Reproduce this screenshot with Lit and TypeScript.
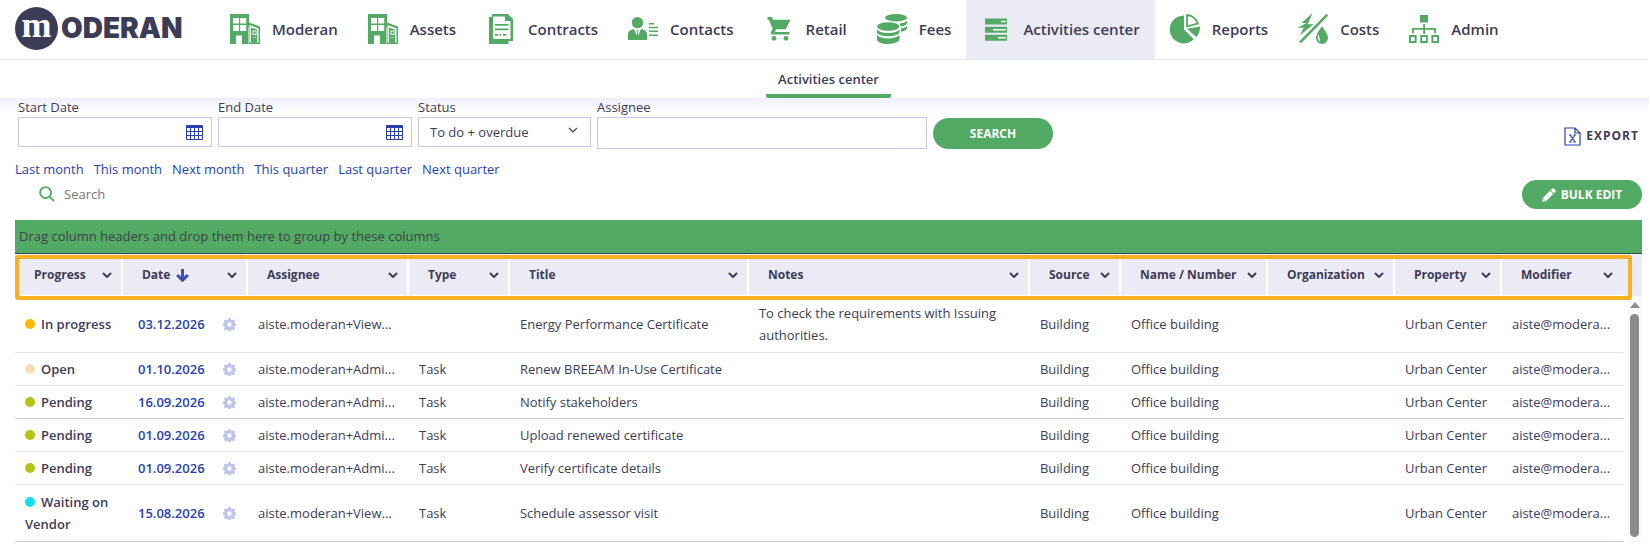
import { LitElement, html, svg, css } from "lit";
import { customElement, property, state } from "lit/decorators.js";
import { classMap } from "lit/directives/class-map.js";
import { styleMap } from "lit/directives/style-map.js";

const building = svg`
  <path d="M0 0h19v8.500l11 4V30H19V13H18.500V30H12v-8.600H6V30H0z"/>
  <path class="cut" d="M3 4h6v5.600H3zM10.200 4h6v5.600h-6zM3 11h6v6H3zM10.200 11h6v6h-6zM19.500 11l9 3.300V28.500H27V24h-4v4.500h-3.500z"/>
  <path d="M20.800 13.500l6.400 2V28.500H26v-5h-3v5h-2.200z"/>
  <path class="cut" d="M22.500 16.500h4v4.500h-4z"/>
  <path d="M23.300 17.500h2.400v2.300h-2.400z"/>`;

const icons: Record<string, unknown> = {
  building,
  contract: svg`
    <path d="M3 0h16l5 5V27h-4.500v3H0V3h3z" transform="translate(3)"/>
    <path class="cut" d="M7 2.500h12v4.500H24.500V25H7z"/>
    <path d="M20.500 2.500L24.500 6.500H20.500zM9 10h13.500v1.800H9zM9 14.500h13.500v1.800H9zM9 20h3v1.800H9zM13.500 20h1.500v1.800h-1.500zM17 20h3.500v1.800H17z"/>`,
  contact: svg`
    <circle cx="9.500" cy="8.600" r="5.700"/>
    <path d="M0 26v-5.500c0-3 2.400-4.900 6-5.500l2.800 6.500L9.200 17.500 8.500 16h2L9.800 17.500l.4 4L13 15c3.600.6 6 2.500 6 5.500V26z"/>
    <path d="M21 9h5v1.500h-5zM21 12.800h9v1.500h-9zM21 16.600h9v1.500h-9zM21 20.400h9v1.500h-9z"/>`,
  cart: svg`
    <path d="M3.500 3h4.300l1.300 2.700H26.500l-4.800 9.600h-9.500l-1.400 2.700H25.500V20.400H8.200c-1.300 0-2-1.300-1.300-2.500l1.800-3.200L4.800 5.700H3.500z"/>
    <circle cx="10" cy="24.300" r="2.400"/><circle cx="22" cy="24.300" r="2.400"/>`,
  coins: svg`
    <ellipse cx="19" cy="3.700" rx="11" ry="3.700"/>
    <path d="M22.500 9.600c4-.5 6.600-1.600 7.500-2.800v2c0 2-2.600 3.200-6.200 3.800zM24 14.600c3.500-.6 5.300-1.600 6-2.800v2c0 2-2.200 3.400-6 4z"/>
    <ellipse cx="11.200" cy="12.500" rx="11.200" ry="4.200"/>
    <path d="M0 15.500c2 2.500 6.500 3.500 11.200 3.500s9.300-1 11.300-3.500v2.500c0 2.500-5 4.300-11.300 4.300S0 20.500 0 18zM0 21c2 2.300 6.500 3.400 11.200 3.400s9.300-1.100 11.300-3.400v4.300c0 2.600-5 4.600-11.300 4.600S0 28 0 25.400z"/>`,
  list: svg`
    <path d="M4 4.500h22v6H4zM4 12.700h22v6H4zM4 20.800h22v6H4z"/>
    <path class="cut" d="M20 6.700h5v1.600h-5zM12 15h13v1.600H12zM17 23h8v1.600h-8z"/>`,
  pie: svg`
    <path d="M14 1.500V15.500L23.800 25.200A14 14 0 1 1 14 1.500z"/>
    <path d="M17 14.800L30 12.500c.2 4-1 7.400-3.600 10.500z"/>
    <path fill-rule="evenodd" d="M16.200 0c6.300.3 11 4 12.800 10.300L16.200 13.500zM18 2.200v9l8.600-2.200C25.200 5.200 22.500 3 18 2.200z"/>`,
  utility: svg`
    <path d="M14.500-1L3.500 9h5.300L-.5 13.800h6.300L1.800 21.500 15.500 10.300H9.800z"/>
    <path d="M28.300 0L30.300 1.600 3 29.200 1 27.700z"/>
    <path fill-rule="evenodd" d="M24 12c3 5 6 8 6 12a6 6 0 0 1-12 0c0-4 3-7 6-12zM20.500 20c-1.300 3-.8 6.500 1.800 8-1-3-.8-5.500-1.800-8z"/>`,
  tree: svg`
    <path d="M11 1h8v7.400h-8zM14.200 10h1.800v10h-1.800zM3 14h24v1.800H3zM3 14h1.800v5.500H3zM25.200 14H27v5.500h-1.800z"/>
    <path fill-rule="evenodd" d="M0 21h7.600v8H0zm2 2v4h3.600v-4zM11.200 21h7.600v8h-7.600zm2 2v4h3.600v-4zM22.400 21H30v8h-7.600zm2 2v4H28v-4z"/>`,
};

const navItems = [
  ["Moderan", "building"],
  ["Assets", "building"],
  ["Contracts", "contract"],
  ["Contacts", "contact"],
  ["Retail", "cart"],
  ["Fees", "coins"],
  ["Activities center", "list"],
  ["Reports", "pie"],
  ["Costs", "utility"],
  ["Admin", "tree"],
];

const ranges = ["Last month", "This month", "Next month", "This quarter", "Last quarter", "Next quarter"];

const columns: Array<[string, number]> = [
  ["Progress", 108],
  ["Date", 125],
  ["Assignee", 161],
  ["Type", 101],
  ["Title", 239],
  ["Notes", 281],
  ["Source", 91],
  ["Name / Number", 147],
  ["Organization", 127],
  ["Property", 107],
  ["Modifier", 122],
];
const totalWeight = columns.reduce((sum, [, w]) => sum + w, 0);

interface Activity {
  status: string;
  tone: string;
  date: string;
  assignee: string;
  type: string;
  title: string;
  notes?: string;
  monthEnd?: boolean;
}

const admin = "aiste.moderan+Admi...";
const viewer = "aiste.moderan+View...";
const activities: Activity[] = [
  { status: "In progress", tone: "progress", date: "03.12.2026", assignee: viewer, type: "", title: "Energy Performance Certificate", notes: "To check the requirements with Issuing authorities." },
  { status: "Open", tone: "open", date: "01.10.2026", assignee: admin, type: "Task", title: "Renew BREEAM In-Use Certificate" },
  { status: "Pending", tone: "pending", date: "16.09.2026", assignee: admin, type: "Task", title: "Notify stakeholders", monthEnd: true },
  { status: "Pending", tone: "pending", date: "01.09.2026", assignee: admin, type: "Task", title: "Upload renewed certificate" },
  { status: "Pending", tone: "pending", date: "01.09.2026", assignee: admin, type: "Task", title: "Verify certificate details" },
  { status: "Waiting on Vendor", tone: "waiting", date: "15.08.2026", assignee: viewer, type: "Task", title: "Schedule assessor visit", monthEnd: true },
];

const chevron = html`<svg class="chevron" viewBox="0 0 10 6" aria-hidden="true"><path d="M1 1l4 4 4-4" /></svg>`;

@customElement("main-nav")
class MainNav extends LitElement {
  @property() active = "";

  static styles = css`
    :host { display: block; border-bottom: 1px solid #e5e5f0; }
    .bar { display: flex; height: 59px; }
    .brand { display: flex; align-items: center; width: 215px; box-sizing: border-box; padding: 0 0 2px 15px; gap: 3px; text-decoration: none; color: #3d3c57; flex: none; }
    .mark { display: flex; justify-content: center; width: 43px; height: 43px; border-radius: 50%; background: #3d3c57; color: #fff; font: bold 36px/36px "Liberation Serif", serif; }
    .word { font: 900 28px/43px Inter, sans-serif; }
    .links { display: flex; }
    .item { display: flex; align-items: center; gap: 12px; padding: 0 15px 2px; color: #3d3c57; text-decoration: none; font-weight: 600; font-size: 15px; white-space: nowrap; }
    .item.active { background: #ebebf5; }
    svg { width: 30px; height: 30px; overflow: visible; fill: #53aa65; flex: none; }
    .cut { fill: #fff; }
  `;

  render() {
    return html`<header class="bar">
      <a class="brand" href="#home" aria-label="Moderan"><span class="mark">m</span><span class="word">ODERAN</span></a>
      <nav class="links" aria-label="Main">
        ${navItems.map(
          ([label, icon]) => html`<a class=${classMap({ item: true, active: label === this.active })} href="#${icon}">
            <svg viewBox="0 0 30 30" aria-hidden="true">${icons[icon]}</svg><span>${label}</span></a>`
        )}
      </nav>
    </header>`;
  }
}

@customElement("filter-bar")
class FilterBar extends LitElement {
  static styles = css`
    :host { display: block; }
    .filters { display: flex; align-items: flex-start; gap: 6px; padding: 0 10px 0 18px; }
    .field { display: flex; flex-direction: column; }
    .date { width: 194px; }
    .status { width: 173px; }
    .assignee { width: 330px; }
    label { line-height: 19px; color: #3d3c57; }
    .box { display: flex; align-items: center; height: 30px; box-sizing: border-box; border: 1px solid #c5c9e8; background: #fff; }
    .box.tall { height: 32px; }
    input, select { flex: 1; min-width: 0; height: 100%; border: 0; padding: 0 11px; background: none; font: inherit; color: #3d3c57; outline: none; appearance: none; }
    .box .chevron { margin: 0 12px 4px -24px; pointer-events: none; width: 10px; height: 6px; stroke-width: 1.200; }
    .chevron { fill: none; stroke: #3d3c57; }
    button { font: inherit; border: 0; cursor: pointer; }
    .pick { display: flex; padding: 0 8px; background: none; }
    .pick svg { width: 17px; height: 15px; fill: #2a3fb0; }
    .search { width: 120px; height: 31px; margin-top: 20px; border-radius: 16px; background: #53aa65; color: #fff; font-weight: 700; font-size: 12px; }
    .export { display: flex; align-items: center; gap: 5px; margin: 28px 0 0 auto; padding: 0; background: none; color: #3d3c57; font-weight: 700; font-size: 12px; line-height: 20px; letter-spacing: 1px; }
    .export svg { width: 17px; height: 19px; fill: none; stroke: #2a3fb0; stroke-width: 1.200; }
    .ranges { display: flex; gap: 10px; padding: 11px 15px 0; }
    .ranges a { color: #2a3fb0; text-decoration: none; line-height: 18px; }
  `;

  private dateField(id: string, label: string) {
    return html`<div class="field date">
      <label for=${id}>${label}</label>
      <div class="box">
        <input id=${id} type="text" />
        <button class="pick" aria-label="Pick ${label}">
          <svg viewBox="0 0 17 15" aria-hidden="true">
            <path fill-rule="evenodd" d="M1 0h15a1 1 0 0 1 1 1v13a1 1 0 0 1-1 1H1a1 1 0 0 1-1-1V1a1 1 0 0 1 1-1zM1 3h3v3H1zM5 3h3v3H5zM9 3h3v3H9zM13 3h3v3h-3zM1 7h3v3H1zM5 7h3v3H5zM9 7h3v3H9zM13 7h3v3h-3zM1 11h3v3H1zM5 11h3v3H5zM9 11h3v3H9zM13 11h3v3h-3z" />
          </svg>
        </button>
      </div>
    </div>`;
  }

  render() {
    return html`
      <div class="filters">
        ${this.dateField("start", "Start Date")} ${this.dateField("end", "End Date")}
        <div class="field status">
          <label for="status">Status</label>
          <div class="box">
            <select id="status"><option>To do + overdue</option></select>
            ${chevron}
          </div>
        </div>
        <div class="field assignee">
          <label for="assignee">Assignee</label>
          <div class="box tall"><input id="assignee" type="text" /></div>
        </div>
        <button class="search">SEARCH</button>
        <button class="export">
          <svg viewBox="0 0 17 19" aria-hidden="true">
            <path d="M1 1h10l5 5v12H1zM11 1v5h5M5 8h2.500M9.500 8H12M5 15h2.500M9.500 15H12M6 8l5 7M11 8l-5 7" />
          </svg>
          EXPORT
        </button>
      </div>
      <nav class="ranges" aria-label="Date ranges">${ranges.map((r) => html`<a href="#range">${r}</a>`)}</nav>
    `;
  }
}

@customElement("activity-grid")
class ActivityGrid extends LitElement {
  @state() private rows = activities;

  static styles = css`
    :host { display: block; padding: 2px 7px 0 15px; }
    button { font: inherit; border: 0; padding: 0; cursor: pointer; background: none; }
    .tools { display: flex; align-items: center; justify-content: space-between; height: 29px; padding-left: 24px; margin-bottom: 11px; }
    .find { display: flex; align-items: center; gap: 9px; padding-bottom: 2px; }
    .find svg { width: 16px; height: 16px; fill: none; stroke: #53aa65; stroke-width: 2; }
    .find input { width: 200px; border: 0; padding: 0; outline: none; font: inherit; background: none; }
    .find input::placeholder { color: #757575; }
    .bulk { display: flex; align-items: center; justify-content: center; gap: 5px; width: 120px; height: 29px; border-radius: 15px; background: #53aa65; color: #fff; font-weight: 700; font-size: 12px; }
    .bulk svg { width: 14px; height: 14px; fill: #fff; }
    .group { padding: 0 4px; line-height: 33px; background: #53aa65; border-bottom: 1px solid #3c4a44; color: #414445; }
    .grid { position: relative; display: flex; align-items: stretch; }
    table { flex: 1; width: 100%; min-width: 0; border-collapse: separate; border-spacing: 0; table-layout: fixed; }
    th { height: 42px; padding: 0 11px 0 19px; box-sizing: border-box; background: #ebebf5; border-bottom: 1px solid #fff; box-shadow: inset -2px 0 #fff; text-align: left; font-weight: 700; font-size: 12px; }
    th:last-child { box-shadow: none; }
    .head { display: flex; align-items: center; white-space: nowrap; }
    .head .menu { margin-left: auto; display: flex; }
    .chevron { width: 10px; height: 6px; fill: none; stroke: #3d3c57; stroke-width: 2; }
    .sort { width: 13px; height: 13px; margin: 2px 0 0 6px; fill: none; stroke: #3a4cb8; stroke-width: 3; }
    td { height: 32px; padding: 0 10px; border-bottom: 1px solid #e5e5f1; line-height: 22px; overflow: hidden; text-overflow: ellipsis; white-space: nowrap; box-sizing: content-box; }
    .month-end td { border-bottom-color: #c8cce4; }
    td.wrap { padding-right: 4px; white-space: normal; }
    .long td { height: 56px; }
    td.state { padding-right: 0; font-weight: 600; white-space: normal; }
    .dot { display: inline-block; width: 10px; height: 10px; margin-right: 6px; border-radius: 50%; }
    .dot.progress { background: #fbb905; }
    .dot.open { background: #f5deb3; }
    .dot.pending { background: #b5c412; }
    .dot.waiting { background: #0fe0ec; }
    .when { display: flex; align-items: center; justify-content: space-between; padding: 0 2px 0 5px; }
    .when a { color: #2a3fb0; font-weight: 600; text-decoration: none; }
    .gear { display: flex; }
    .gear svg { width: 13px; height: 13px; fill: #bfc5e6; }
    .rail { display: flex; flex-direction: column; width: 18px; flex: none; }
    .cap { height: 42px; background: #ebebf5; flex: none; }
    .track { flex: 1; display: flex; flex-direction: column; align-items: center; gap: 6px; margin-left: 3px; padding: 6px 0 5px; background: #fafafa; }
    .up { width: 0; border: 5px solid transparent; border-top: 0; border-bottom: 6px solid #8b8b8b; }
    .thumb { flex: 1; width: 9px; border-radius: 5px; background: #8b8b8b; }
    .focus-ring { position: absolute; top: 1px; left: 0; right: 10px; height: 45px; box-sizing: border-box; border: 4px solid #f5b122; border-radius: 3px; pointer-events: none; }
  `;

  private row(a: Activity) {
    return html`<tr class=${classMap({ "month-end": !!a.monthEnd, long: !!a.notes || a.status.length > 12 })}>
      <td class="state"><span class="dot ${a.tone}"></span>${a.status}</td>
      <td>
        <div class="when">
          <a href="#activity">${a.date}</a>
          <button class="gear" aria-label="Settings">
            <svg viewBox="0 0 13 13" aria-hidden="true">
              <path fill-rule="evenodd" d="M5.300 0h2.400l.4 1.700 1.100.5L10.700 1.200l1.500 1.600-.9 1.500.4 1 1.300.3v2.300l-1.300.4-.4 1.100.9 1.400-1.600 1.600-1.500-.9-1.100.4-.4 1.100H5.300l-.4-1.100-1.100-.4-1.500.9L.8 10.800l.9-1.400-.4-1.100L0 7.900V5.600l1.300-.3.4-1-.9-1.500 1.500-1.600 1.500 1 1.100-.5zM6.500 4.300a2.200 2.200 0 1 0 0 4.400 2.200 2.200 0 0 0 0-4.400z" />
            </svg>
          </button>
        </div>
      </td>
      <td>${a.assignee}</td>
      <td>${a.type}</td>
      <td>${a.title}</td>
      <td class="wrap">${a.notes ?? ""}</td>
      <td>Building</td>
      <td>Office building</td>
      <td></td>
      <td>Urban Center</td>
      <td>aiste@modera...</td>
    </tr>`;
  }

  render() {
    return html`
      <div class="tools">
        <div class="find">
          <svg viewBox="0 0 17 17" aria-hidden="true"><circle cx="7" cy="7" r="5.800" /><path d="M11.500 11.500L16 16" /></svg>
          <input type="search" placeholder="Search" aria-label="Search" />
        </div>
        <button class="bulk">
          <svg viewBox="0 0 14 14" aria-hidden="true"><path fill-rule="evenodd" d="M10.300 0.500q.7-.6 1.400 0l1.800 1.800q.6.7 0 1.400L12 5.200 8.800 2zM8 2.800L11.200 6 4 13.200 0 14l.8-4zM1.600 10.800L1.300 12.700 3.200 12.400z" /></svg>
          BULK EDIT
        </button>
      </div>
      <div class="group">Drag column headers and drop them here to group by these columns</div>
      <div class="grid">
        <table>
          <colgroup>
            ${columns.map(([, w]) => html`<col style=${styleMap({ width: `${(w / totalWeight) * 100}%` })} />`)}
          </colgroup>
          <thead>
            <tr>
              ${columns.map(
                ([name]) => html`<th scope="col">
                  <div class="head">
                    <span>${name}</span>
                    ${name === "Date"
                      ? html`<svg class="sort" viewBox="0 0 13 13" aria-label="Sorted descending"><path d="M6.500 0v11M1.200 6l5.300 5.300L11.800 6" /></svg>`
                      : ""}
                    <button class="menu" aria-label="${name} menu">${chevron}</button>
                  </div>
                </th>`
              )}
            </tr>
          </thead>
          <tbody>${this.rows.map((a) => this.row(a))}</tbody>
        </table>
        <div class="rail" aria-hidden="true">
          <div class="cap"></div>
          <div class="track"><div class="up"></div><div class="thumb"></div></div>
        </div>
        <div class="focus-ring"></div>
      </div>
    `;
  }
}

@customElement("app-root")
class AppRoot extends LitElement {
  static styles = css`
    :host { display: block; background: #fff; color: #3d3c57; font: 13px/20px "Open Sans", "Noto Sans", sans-serif; }
    .tabs { display: flex; justify-content: center; height: 38px; padding-left: 8px; }
    .tab { display: flex; align-items: center; padding: 4px 12px 0; border-bottom: 4px solid #53aa65; border-radius: 0 0 2px 2px; color: inherit; text-decoration: none; font-weight: 600; }
    .content { background: linear-gradient(#eeeffa, #fff 14px); }
  `;

  render() {
    return html`
      <main-nav active="Activities center"></main-nav>
      <nav class="tabs" aria-label="Section"><a class="tab" href="#activities">Activities center</a></nav>
      <main class="content">
        <filter-bar></filter-bar>
        <activity-grid></activity-grid>
      </main>
    `;
  }
}
